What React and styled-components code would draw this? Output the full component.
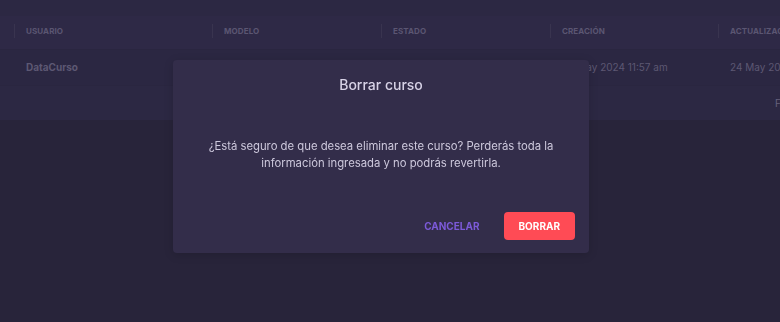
import React from "react";
import styled, { createGlobalStyle } from "styled-components";

const GlobalStyle = createGlobalStyle`
  html, body {
    margin: 0;
    padding: 0;
    background: #28243a;
    font-family: Inter, "Liberation Sans", sans-serif;
    overflow: hidden;
  }
`;

const Page = styled.div`
  height: 322px;
  width: 780px;
  background: #28243a;
  overflow: hidden;
`;

const Card = styled.div`
  background: #2c2843;
  padding-top: 16px;
  width: 1000px;
`;

const Row = styled.div`
  display: grid;
  grid-template-columns: 14px 198px 169px 169px 168px 1fr;
  align-items: center;
  box-sizing: border-box;
  height: ${(p) => p.$height || 34}px;
  padding-bottom: ${(p) => p.$lift || 0}px;
  background: ${(p) => p.$bg || "transparent"};
  border-bottom: 1px solid #2a2640;
`;

const HeadCell = styled.div`
  position: relative;
  padding-left: 12px;
  font-size: 8px;
  font-weight: 700;
  text-transform: uppercase;
  color: #5b5672;
  letter-spacing: 0.1px;

  &::before {
    content: "";
    position: absolute;
    left: 0;
    top: 50%;
    height: 14px;
    margin-top: -7px;
    width: 1px;
    background: #39344f;
  }
`;

const Cell = styled.div`
  padding-left: 12px;
  font-size: 10px;
  font-weight: ${(p) => (p.$bold ? 700 : 400)};
  color: #5d5873;
  white-space: nowrap;
`;

const Footer = styled.div`
  display: grid;
  grid-template-columns: 775px auto;
  align-items: center;
  box-sizing: border-box;
  height: 34px;
  padding-bottom: 1px;
  font-size: 10px;
  color: #66617c;
`;

const Overlay = styled.div`
  position: fixed;
  inset: 0;
  display: flex;
  align-items: flex-start;
  justify-content: flex-start;
  padding: 60px 0 0 173px;
`;

const Modal = styled.div`
  width: 416px;
  box-sizing: border-box;
  background: #332d4a;
  border-radius: 4px;
  box-shadow: 0 2px 10px rgba(0, 0, 0, 0.15);
  padding: 16px 14px 13px;
  display: flex;
  flex-direction: column;
`;

const Title = styled.h2`
  margin: 0;
  text-align: center;
  font-size: 14px;
  line-height: 18px;
  font-weight: 500;
  color: #d7d2e6;
`;

const Body = styled.p`
  margin: 44px auto 0;
  max-width: 380px;
  text-align: center;
  font-size: 11.3px;
  line-height: 17px;
  color: #cdc8dc;
`;

const Actions = styled.div`
  margin-top: 40px;
  display: flex;
  justify-content: flex-end;
  align-items: center;
  gap: 12px;
`;

const Button = styled.button`
  font-family: inherit;
  font-size: 10px;
  font-weight: 700;
  text-transform: uppercase;
  height: 28px;
  border-radius: 4px;
  border: none;
  cursor: pointer;
  padding: 0 ${(p) => (p.$danger ? 15 : 12)}px;
  background: ${(p) => (p.$danger ? "#ff4b55" : "transparent")};
  color: ${(p) => (p.$danger ? "#ffffff" : "#7c5ad9")};
`;

const columns = ["Usuario", "Modelo", "Estado", "Creación", "Actualización"];

export default function App() {
  return (
    <Page>
      <GlobalStyle />
      <Card>
        <Row $bg="#2e2946" $lift={3}>
          <span />
          {columns.map((c) => (
            <HeadCell key={c}>{c}</HeadCell>
          ))}
        </Row>
        <Row $height={36} $lift={1} $bg="#2b2742">
          <span />
          <Cell $bold>DataCurso</Cell>
          <Cell />
          <Cell />
          <Cell>24 May 2024 11:57 am</Cell>
          <Cell>24 May 2024 11:57 am</Cell>
        </Row>
        <Footer>
          <span />
          <span>Filas por página</span>
        </Footer>
      </Card>
      <Overlay>
        <Modal>
          <Title>Borrar curso</Title>
          <Body>
            ¿Está seguro de que desea eliminar este curso? Perderás toda la
            información ingresada y no podrás revertirla.
          </Body>
          <Actions>
            <Button>Cancelar</Button>
            <Button $danger>Borrar</Button>
          </Actions>
        </Modal>
      </Overlay>
    </Page>
  );
}
